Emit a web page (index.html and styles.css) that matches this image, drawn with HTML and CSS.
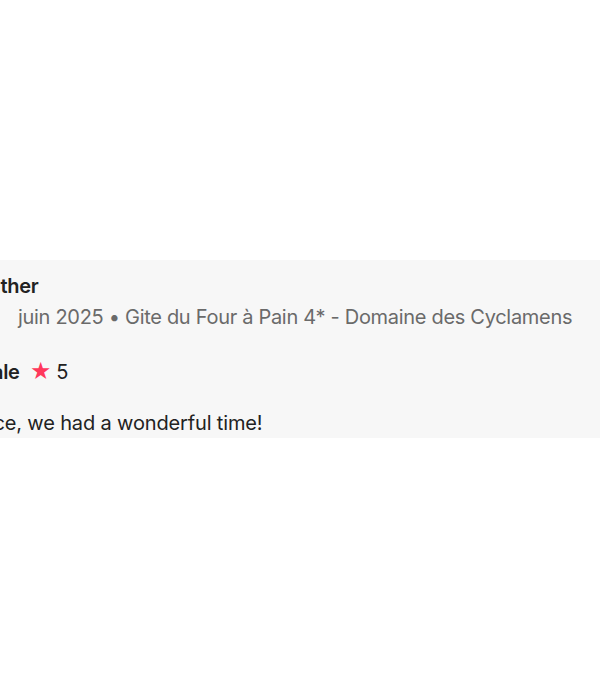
FILE: index.html
```html
<!DOCTYPE html>
<html lang="fr">
<head>
    <meta charset="UTF-8">
    <meta name="viewport" content="width=device-width, initial-scale=1.0">
    <title>Avis</title>
    <link rel="stylesheet" href="styles.css">
</head>
<body>
    <div class="band">
        <div class="review">
            <div class="author">Heather</div>
            <div class="meta">juin 2025 • Gite du Four à Pain 4* - Domaine des Cyclamens</div>
            <div class="rating">
                <span class="rating-label">Note globale</span>
                <span class="star">★</span>
                <span class="score">5</span>
            </div>
            <p class="comment">Beautiful place, we had a wonderful time!</p>
        </div>
    </div>
</body>
</html>
```

FILE: styles.css
```css
html, body {
    margin: 0;
    background: #fff;
    overflow: hidden;
}
body {
    font-family: Inter, "Noto Sans", sans-serif;
    color: #222;
    padding-top: 260px;
}
.band {
    background: #f7f7f7;
    height: 178px;
    overflow: hidden;
}
.review {
    margin-left: -110px;
    padding-top: 13px;
    font-size: 20px;
    line-height: 26px;
    letter-spacing: -0.3px;
}
.author {
    font-weight: 600;
    padding-left: 73px;
}
.meta {
    color: #6a6a6a;
    padding-left: 128px;
    margin-top: 5px;
}
.rating {
    margin-top: 29px;
    padding-left: 11px;
    font-weight: 600;
    display: flex;
    align-items: center;
    gap: 5px;
}
.star {
    color: #ff385c;
    font-size: 21px;
    margin-left: 5px;
}
.score {
    font-weight: 400;
}
.comment {
    margin: 25px 0 0 -12px;
    letter-spacing: -0.15px;
}
```
